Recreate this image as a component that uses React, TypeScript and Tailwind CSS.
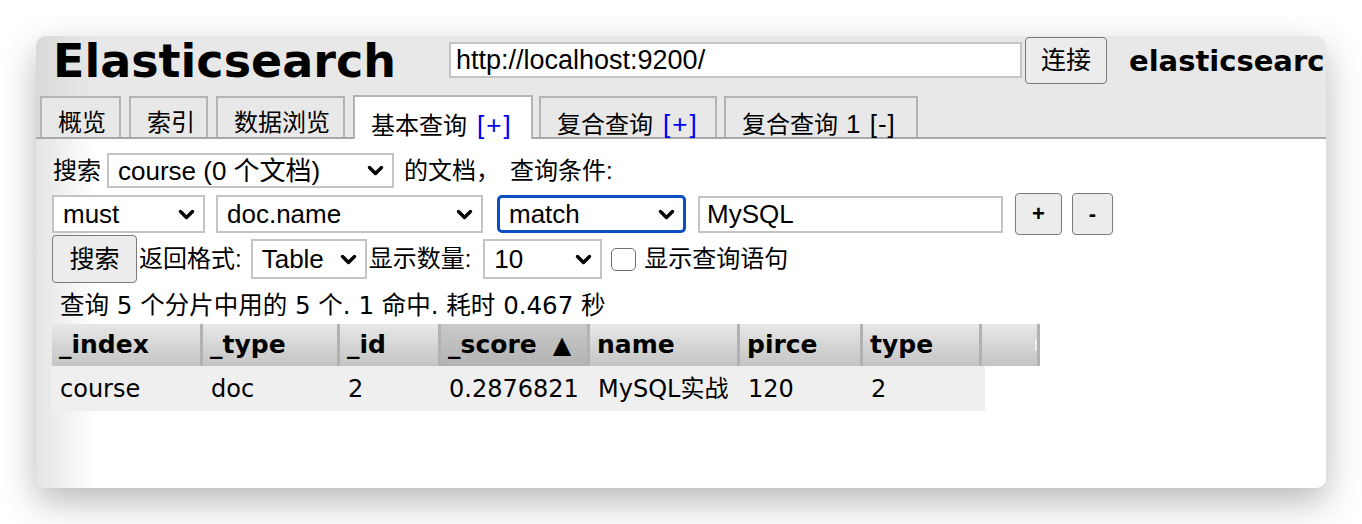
import React from "react";

const sans = { fontFamily: "'Liberation Sans', 'Noto Sans CJK SC', sans-serif" };
const dv = { fontFamily: "'DejaVu Sans', 'Noto Sans CJK SC', sans-serif" };

const Chevron = () => (
    <svg width="17" height="11" viewBox="0 0 17 11" className="shrink-0">
        <path d="M2.5 2.5l6 6 6-6" fill="none" stroke="black" strokeWidth="3.4" strokeLinecap="round" strokeLinejoin="round" />
    </svg>
);

const Select = ({ value, className }: { value: string; className: string }) => (
    <div className={`shrink-0 flex items-center justify-between bg-white pl-[9px] pr-[8px] text-[26px] ${className}`}>
        <span className="whitespace-nowrap">{value}</span>
        <Chevron />
    </div>
);

const tabs = [
    { label: "概览", w: "w-[81px]", ml: "ml-0" },
    { label: "索引", w: "w-[79px]", ml: "ml-[8px]" },
    { label: "数据浏览", w: "w-[129px]", ml: "ml-[8px]" },
    { label: "基本查询", extra: "[+]", w: "w-[180px]", ml: "ml-[8px]", active: true },
    { label: "复合查询", extra: "[+]", w: "w-[178px]", ml: "ml-[6px]" },
    { label: "复合查询", tail: "1 [-]", w: "w-[194px]", ml: "ml-[7px]" },
];

const cols = [
    { name: "_index", w: "w-[151px]", v: "course" },
    { name: "_type", w: "w-[137px]", v: "doc" },
    { name: "_id", w: "w-[101px]", v: "2" },
    { name: "_score", arrow: true, w: "w-[149px]", v: "0.2876821", sorted: true },
    { name: "name", w: "w-[150px]", v: "MySQL实战" },
    { name: "pirce", w: "w-[123px]", v: "120" },
    { name: "type", w: "w-[119px]", v: "2" },
];

export default function App() {
    return (
        <div className="w-[1362px] h-[524px] bg-white pt-[36px] pl-[36px] overflow-hidden">
            <div
                className="w-[1290px] h-[452px] rounded-[10px] overflow-hidden bg-[linear-gradient(to_right,#e4e4e4,#ffffff_60px)] shadow-[0_14px_36px_rgba(0,0,0,0.28)] text-black"
                style={sans}
            >
                {/* header */}
                <div className="h-[103px] bg-[linear-gradient(to_right,#d9d9d9,#e8e8e8_60px)] border-b-2 border-[#a9a9a9] flex flex-col">
                    <div className="h-[60px] flex items-start whitespace-nowrap">
                        <div className="shrink-0 ml-[17px] mt-0 text-[46px] font-bold leading-[1.1]" style={dv}>Elasticsearch</div>
                        <div className="shrink-0 ml-[53px] mt-[6px] w-[573px] h-[36px] bg-white border-2 border-[#c4c4c4] flex items-center pl-[5px] text-[27px]">
                            http://localhost:9200/
                        </div>
                        <button className="shrink-0 ml-[3px] mt-[1px] w-[82px] h-[47px] bg-[#ececec] border-[1.5px] border-[#7a7a7a] rounded-[4px] text-[25px] leading-none">
                            连接
                        </button>
                        <div className="shrink-0 ml-[22px] mt-[8px] text-[29px] font-bold leading-[1.2]" style={dv}>elasticsearch</div>
                    </div>
                    <div className="flex items-end h-[41px] pl-[4px]">
                        {tabs.map((t, i) => (
                            <div
                                key={i}
                                className={`shrink-0 ${t.w} ${t.ml} border-2 border-b-0 border-[#b4b4b4] pl-[16px] text-[24px] leading-none whitespace-nowrap ${
                                    t.active ? "h-[44px] -mb-[2px] bg-white pt-[15px]" : "h-[41px] bg-[#e8e8e8] pt-[13px]"
                                }`}
                            >
                                {t.label}
                                {t.extra && <span className="ml-[10px] text-[26px] tracking-[2px] text-[#0000ee]">{t.extra}</span>}
                                {t.tail && <span className="ml-[8px] text-[26px] tracking-[1px]">{t.tail}</span>}
                            </div>
                        ))}
                    </div>
                </div>

                {/* query form */}
                <div className="pl-[16px] pt-[14px] text-[24px] leading-none">
                    <div className="flex items-center h-[35px] whitespace-nowrap">
                        <span className="ml-[1px]">搜索</span>
                        <Select value="course (0 个文档)" className="ml-[6px] w-[287px] h-[35px] border-2 border-[#c4c4c4]" />
                        <span className="ml-[10px]">的文档，</span>
                        <span className="ml-[10px]">查询条件:</span>
                    </div>
                    <div className="flex items-center h-[38px] mt-[7px]">
                        <Select value="must" className="w-[153px] h-[38px] border-2 border-[#c4c4c4]" />
                        <Select value="doc.name" className="ml-[11px] w-[267px] h-[38px] border-2 border-[#c4c4c4]" />
                        <Select value="match" className="ml-[14px] w-[189px] h-[38px] border-[3px] border-[#0a4fc4] rounded-[5px] pl-[7px]" />
                        <div className="shrink-0 ml-[12px] w-[305px] h-[37px] border-2 border-[#c4c4c4] bg-white flex items-center pl-[7px] text-[26px]">MySQL</div>
                        <button className="shrink-0 ml-[12px] w-[47px] h-[42px] bg-[#ececec] border-[1.5px] border-[#7a7a7a] rounded-[4px] text-[22px] font-bold">+</button>
                        <button className="shrink-0 ml-[10px] w-[41px] h-[42px] bg-[#ececec] border-[1.5px] border-[#7a7a7a] rounded-[4px] text-[22px] font-bold">-</button>
                    </div>
                    <div className="flex items-center h-[48px] mt-[2px] whitespace-nowrap">
                        <button className="shrink-0 w-[85px] h-[48px] bg-[#ececec] border-[1.5px] border-[#7a7a7a] rounded-[4px] text-[25px] leading-none">搜索</button>
                        <span className="ml-[2px]">返回格式:</span>
                        <Select value="Table" className="ml-[9px] w-[116px] h-[40px] border-2 border-[#c4c4c4]" />
                        <span className="ml-[2px]">显示数量:</span>
                        <Select value="10" className="ml-[12px] w-[119px] h-[40px] border-2 border-[#c4c4c4]" />
                        <span className="shrink-0 ml-[9px] w-[25px] h-[23px] border-[1.5px] border-[#6f6f6f] rounded-[5px] bg-white" />
                        <span className="ml-[8px]">显示查询语句</span>
                    </div>
                </div>

                {/* results */}
                <div className="pl-[16px]" style={dv}>
                    <div className="h-[41px] pl-[8px] pt-[11px] text-[24.5px] leading-none whitespace-nowrap">
                        查询 5 个分片中用的 5 个. 1 命中. 耗时 0.467 秒
                    </div>
                    <div className="flex h-[42px]">
                        {cols.map((c) => (
                            <div
                                key={c.name}
                                className={`shrink-0 ${c.w} h-full flex items-center pl-[7px] border-r-[3px] border-[#b2b2b2] text-[25px] font-bold whitespace-nowrap bg-gradient-to-b ${
                                    c.sorted ? "from-[#c9c9c9] to-[#b3b3b3]" : "from-[#e8e8e8] to-[#c4c4c4]"
                                }`}
                            >
                                {c.name}
                                {c.arrow && <span className="ml-[16px] text-[24px]">▲</span>}
                            </div>
                        ))}
                        <div className="shrink-0 w-[58px] h-full border-r-[3px] border-[#b2b2b2] bg-gradient-to-b from-[#e8e8e8] to-[#c4c4c4] flex items-center justify-end">
                            <span className="w-[2px] h-[12px] bg-[#eeeeee]" />
                        </div>
                    </div>
                    <div className="flex h-[45px] w-[933px] bg-[#efefef]">
                        {cols.map((c) => (
                            <div key={c.name} className={`shrink-0 ${c.w} h-full flex items-center pl-[8px] text-[24px] whitespace-nowrap`}>
                                {c.v}
                            </div>
                        ))}
                    </div>
                </div>
            </div>
        </div>
    );
}
